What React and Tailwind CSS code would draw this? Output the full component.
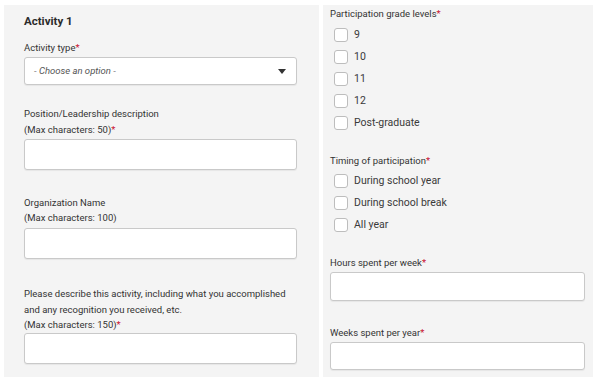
import React from 'react';

const Req = () => <span className="text-[#c8102e]">*</span>;

const Box = ({ h = 'h-[31px]' }) => (
  <div className={`${h} w-full rounded-[3px] border border-[#c9c9c9] bg-white shadow-[0_1px_1px_rgba(0,0,0,0.06)]`} />
);

const Check = ({ label }) => (
  <label className="flex h-[22px] items-center gap-[6px] pl-[4px]">
    <span className="h-[14px] w-[14px] rounded-[3px] border border-[#bdbdbd] bg-white" />
    <span className="text-[10.5px] text-[#3a3a3a]">{label}</span>
  </label>
);

export default function App() {
  return (
    <div className="flex h-[382px] w-[600px] gap-[4px] bg-white px-[4px] py-[5px] font-['Roboto',sans-serif] text-[#333]">
      {/* left column */}
      <div className="flex w-[315px] flex-col bg-[#f4f4f4] pl-[20px] pr-[22px] *:shrink-0">
        <h2 className="mt-[8px] text-[11.5px] font-bold leading-[16px] text-[#2b2b2b]">Activity 1</h2>

        <div className="mt-[11px] text-[9.5px] leading-[15px]">
          Activity type<Req />
        </div>
        <div className="mt-[2px] flex h-[28px] items-center justify-between rounded-[3px] border border-[#c9c9c9] bg-white pl-[9px] pr-[10px] shadow-[0_1px_1px_rgba(0,0,0,0.06)]">
          <span className="text-[9.5px] italic text-[#555]">- Choose an option -</span>
          <svg width="8" height="5" viewBox="0 0 8 5">
            <path d="M0 0h8L4 5z" fill="#333" />
          </svg>
        </div>

        <div className="mt-[21px] text-[9.5px] leading-[16px]">
          <div>Position/Leadership description</div>
          <div>(Max characters: 50)<Req /></div>
        </div>
        <div className="mt-[1px]">
          <Box />
        </div>

        <div className="mt-[25px] text-[9.5px] leading-[15px]">
          <div>Organization Name</div>
          <div>(Max characters: 100)</div>
        </div>
        <div className="mt-[3px]">
          <Box />
        </div>

        <div className="mt-[27px] whitespace-nowrap text-[9.5px] leading-[15.5px]">
          <div>Please describe this activity, including what you accomplished</div>
          <div>and any recognition you received, etc.</div>
          <div>(Max characters: 150)<Req /></div>
        </div>
        <div className="mt-[0px]">
          <Box />
        </div>
      </div>

      {/* right column */}
      <div className="flex w-[270px] flex-col bg-[#f4f4f4] pl-[7px] pr-[8px] *:shrink-0">
        <div className="mt-[2px] text-[9.5px] leading-[14px]">
          Participation grade levels<Req />
        </div>
        <div className="mt-[3px] flex flex-col">
          <Check label="9" />
          <Check label="10" />
          <Check label="11" />
          <Check label="12" />
          <Check label="Post-graduate" />
        </div>

        <div className="mt-[20px] text-[9.5px] leading-[14px]">
          Timing of participation<Req />
        </div>
        <div className="mt-[2px] flex flex-col">
          <Check label="During school year" />
          <Check label="During school break" />
          <Check label="All year" />
        </div>

        <div className="mt-[20px] text-[9.5px] leading-[14px]">
          Hours spent per week<Req />
        </div>
        <div className="mt-[2px]">
          <Box h="h-[29px]" />
        </div>

        <div className="mt-[25px] text-[9.5px] leading-[14px]">
          Weeks spent per year<Req />
        </div>
        <div className="mt-[2px]">
          <Box h="h-[28px]" />
        </div>
      </div>
    </div>
  );
}
